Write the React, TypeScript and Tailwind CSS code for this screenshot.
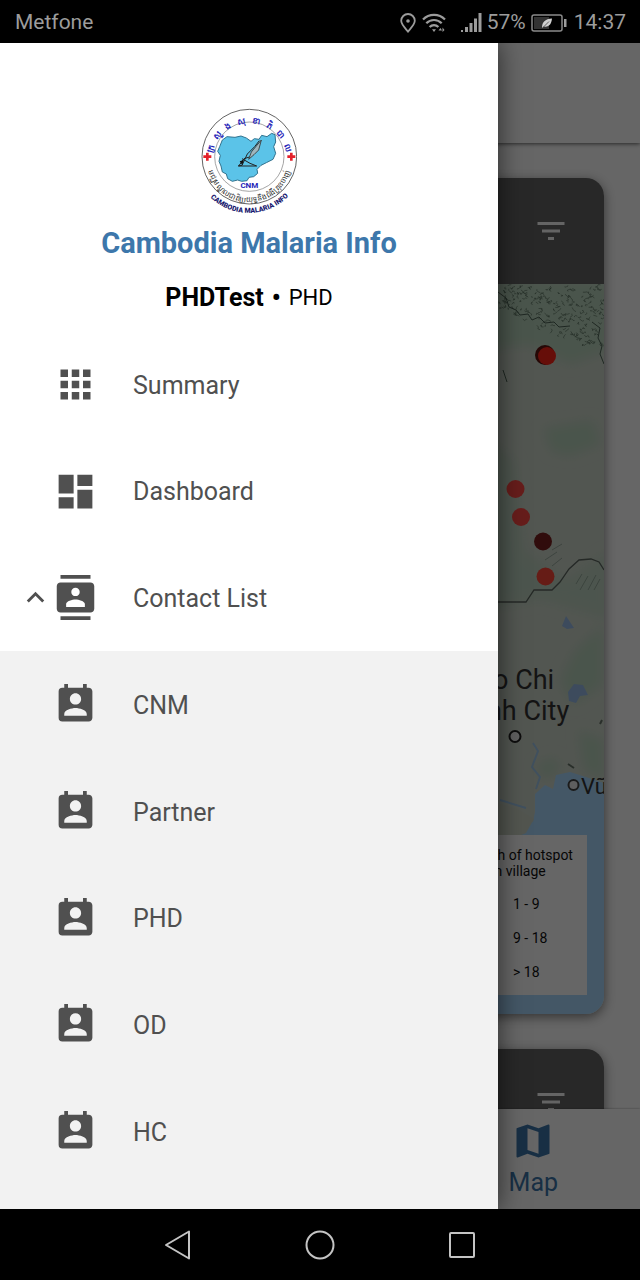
import type { ReactNode } from "react";
import {
  MdApps,
  MdContacts,
  MdDashboard,
  MdFilterList,
  MdKeyboardArrowUp,
  MdMap,
  MdPermContactCalendar,
} from "react-icons/md";

const subItems = ["CNM", "Partner", "PHD", "OD", "HC"];

const legend = ["1 - 9", "9 - 18", "> 18"];

const hotspots = [
  { x: 545, y: 355, r: 10, fill: "#5c1410" },
  { x: 547, y: 356, r: 9, fill: "#ff2418" },
  { x: 515.5, y: 489, r: 9, fill: "#ff4a44" },
  { x: 521, y: 517, r: 9, fill: "#ff4a44" },
  { x: 543, y: 541.5, r: 9, fill: "#78201e" },
  { x: 545.5, y: 576.5, r: 9, fill: "#ff4638" },
];

function StatusBar() {
  return (
    <header className="flex h-[43px] shrink-0 items-center justify-between bg-black pt-[2px] pr-[14px] pl-[15px] text-[21px] text-[#9c9c9c]">
      <span>Metfone</span>
      <div className="flex items-center">
        <svg className="mr-[6px] h-5 w-4" viewBox="0 0 16 20" fill="none" stroke="currentColor" strokeWidth="1.8">
          <path d="M8 18.600C5 15 1.200 11.300 1.200 7.800a6.800 6.800 0 0 1 13.600 0C14.800 11.300 11 15 8 18.600Z" />
          <circle cx="8" cy="8" r="1.8" fill="currentColor" stroke="none" />
        </svg>
        <svg className="mr-[15px] h-5 w-6" viewBox="0 0 24 20" fill="none" stroke="currentColor" strokeWidth="2.200">
          <path d="M1 6.500C7 .2 17 .2 23 6.500" />
          <path d="M4.300 10.300c4.300-4.400 11.100-4.400 15.400 0" />
          <path d="M7.600 14c2.500-2.600 6.300-2.600 8.800 0" />
          <path d="M10 16.200h4L12 19Z" fill="currentColor" stroke="none" />
          <path d="M16.500 17.500l2-2.600 1.500 2.600zM20.500 14.500l2 2.500-2 2z" fill="currentColor" stroke="none" />
        </svg>
        <svg className="mr-1 h-5 w-[22px]" viewBox="0 0 22 20" fill="currentColor">
          <path d="M0 17h2v2H0zM4 14h3v5H4zM8.500 10h3v9h-3zM13 5.500h3V19h-3zM17.500 0h3v19h-3z" />
        </svg>
        <span className="mr-[5px]">57%</span>
        <svg className="mr-[7px] h-[18px] w-9" viewBox="0 0 36 18" fill="none">
          <rect x="1" y="1" width="30" height="16" rx="2" stroke="#8a8a8a" strokeWidth="1.500" />
          <rect x="3" y="3" width="15" height="12" fill="#333" />
          <path d="M33 5h2.500v8H33z" fill="#9c9c9c" />
          <path d="M11 14c0-6 3-9 10-9.500C20.500 10 18 13.500 12.800 12.500z" fill="#d0d0d0" />
          <path d="M12 13.500 18 7.500" stroke="#444" strokeWidth=".8" />
        </svg>
        <span>14:37</span>
      </div>
    </header>
  );
}

function Logo() {
  return (
    <svg className="h-[108px] w-24" viewBox="30 21 288 324" role="img" aria-label="Cambodia Malaria Info logo">
      <defs>
        <path id="ring-top" d="M62 182a113 113 0 0 1 226 0" />
        <path id="ring-low" d="M48 180a127 127 0 0 0 254 0" />
        <path id="ring-base" d="M50 284a166 166 0 0 0 250 -4" />
      </defs>
      <circle cx="175" cy="170" r="142" fill="#fff" stroke="#444" strokeWidth="2.500" />
      <circle cx="175" cy="170" r="104" fill="none" stroke="#777" strokeWidth="2" />
      <path
        d="M86 140l8-20 14-10 24 2 18-4 16 6 14 10 10-8 14 2 8-12 16 4 14-10 10 4 2 22-6 14 6 20-8 18-20 10-16 8-12 12 2 12-12 10-14 2-6 10-16 2-12-4-16 4-14-8-4-14-12-6-4-18-6-14 4-18-8-12z"
        fill="#5bc3e8"
        stroke="#31738f"
        strokeWidth="3"
      />
      <path d="M205 122l-14 18-22 22-16 34-12 2M153 176l24 14 20 8-54 0 16-22 20-6" fill="none" stroke="#222" strokeWidth="3" />
      <path d="M211 120l-8 30-14 14-16 14 8-22z" fill="#9fb6bd" stroke="#333" strokeWidth="2.500" />
      <path d="M146 184l12-4-4 16z" fill="#111" />
      <g fill="#e3202a">
        <path d="M45 158h8v8h8v8h-8v8h-8v-8h-8v-8h8zM297 158h8v8h8v8h-8v8h-8v-8h-8v-8h8z" />
      </g>
      <text x="175" y="265" textAnchor="middle" fill="#2525b8" className="font-['Roboto',sans-serif] text-[24px] font-bold">
        CNM
      </text>
      <text fill="#2525b8" className="font-['Noto_Sans',sans-serif] text-[25px] font-bold whitespace-pre">
        <textPath href="#ring-top" startOffset="50%" textAnchor="middle">
          {"ក្រ   សួ   ង   សុ   ខា   ភិ   បា   ល"}
        </textPath>
      </text>
      <text fill="#222" className="font-['Noto_Sans',sans-serif] text-[22px]">
        <textPath href="#ring-low" startOffset="50%" textAnchor="middle">
          មជ្ឈមណ្ឌលជាតិប្រយុទ្ធនឹងជំងឺគ្រុនចាញ់
        </textPath>
      </text>
      <text fill="#17176e" className="font-['Roboto',sans-serif] text-[21px] font-black">
        <textPath href="#ring-base" startOffset="50%" textAnchor="middle">
          CAMBODIA MALARIA INFO
        </textPath>
      </text>
    </svg>
  );
}

function MenuRow({ icon, label, lead }: { icon: ReactNode; label: string; lead?: ReactNode }) {
  return (
    <>
      <span className="flex w-[35px] shrink-0">{lead}</span>
      <span className="shrink-0 text-[45px]">{icon}</span>
      <span className="ml-[35px] pt-[2px]">{label}</span>
    </>
  );
}

const rowClass = "flex h-full w-full items-center pl-[18px] text-left";

function Drawer() {
  return (
    <aside className="z-10 col-start-1 row-start-1 flex w-[498px] max-w-full flex-col bg-white shadow-[0_0_24px_rgba(0,0,0,0.6)]">
      <div className="flex h-[288px] shrink-0 flex-col items-center pt-16">
        <Logo />
        <h1 className="mt-3 text-[29px] leading-8 font-bold text-[#3d77ab]">Cambodia Malaria Info</h1>
        <p className="mt-[23px] flex items-center gap-2 leading-8 text-black">
          <span className="text-[25px] font-bold">PHDTest</span>
          <span className="text-[25px] font-bold">•</span>
          <span className="text-[22px]">PHD</span>
        </p>
      </div>
      <nav className="flex flex-1 flex-col text-[25px] text-[#505050]">
        <ul className="grid flex-[3] auto-rows-fr">
          <li>
            <a href="#summary" className={rowClass}>
              <MenuRow icon={<MdApps />} label="Summary" />
            </a>
          </li>
          <li>
            <a href="#dashboard" className={rowClass}>
              <MenuRow icon={<MdDashboard />} label="Dashboard" />
            </a>
          </li>
          <li>
            <button type="button" aria-expanded="true" className={rowClass}>
              <MenuRow icon={<MdContacts />} label="Contact List" lead={<MdKeyboardArrowUp className="text-[35px]" />} />
            </button>
          </li>
        </ul>
        <ul className="grid flex-[5] auto-rows-fr bg-[#f2f2f2] pb-6">
          {subItems.map((label) => (
            <li key={label}>
              <a href={`#${label.toLowerCase()}`} className={rowClass}>
                <MenuRow icon={<MdPermContactCalendar />} label={label} />
              </a>
            </li>
          ))}
        </ul>
      </nav>
    </aside>
  );
}

// Deterministic ridge strokes for the hilly area along the top of the map.
function ridges() {
  let seed = 7;
  const next = () => {
    seed = (seed * 16807) % 2147483647;
    return seed / 2147483647;
  };
  let d = "";
  for (let i = 0; i < 210; i++) {
    const x = 500 + next() * 103;
    const y = 286 + next() * (24 + (x - 498) * 0.42);
    d += `M${x.toFixed(1)} ${y.toFixed(1)}`;
    for (let k = 0; k < 3; k++) {
      d += `l${(next() * 4 - 1.5).toFixed(1)} ${(next() * 4 - 2).toFixed(1)}`;
    }
  }
  return d;
}

function TerrainMap() {
  return (
    <svg className="h-full w-full" viewBox="36 284 568 730" preserveAspectRatio="xMaxYMin slice" role="img" aria-label="Hotspot map">
      <defs>
        <filter id="soft" x="-20%" y="-20%" width="140%" height="140%">
          <feGaussianBlur stdDeviation="6" />
        </filter>
      </defs>
      <rect x="36" y="284" width="568" height="730" fill="#ced6cb" />
      <g filter="url(#soft)" fill="#b9d4bd">
        <path d="M490 280H610V350L570 365 530 345 490 350z" />
        <path d="M543 428l50-8 8 24-30 12-20-4z" />
        <path d="M490 440l25 20 10 90 40 30 45-30V620L540 600 490 610z" opacity=".7" />
        <path d="M560 680l15-30 28-25v60l-30 20z" />
        <path d="M578 730l26 10v40l-20-10zM535 765l20-8 6 14-18 8z" />
      </g>
      <path d={ridges()} fill="none" stroke="#4f6656" strokeWidth=".8" opacity=".7" />
      <path
        d="M498 292l8 6 3 9 7 3 4 5 8-1 4 6 7-3 6 6 9-1 5 5 11-1M592 322l8 6-2 10 4 8-2 8 4 10M503 370l4 12"
        fill="none"
        stroke="#4d6356"
        strokeWidth="1"
      />
      <path d="M498 602h28l8-12h18l8-8 9-13 10-9 12-1 8 3 5 8" fill="none" stroke="#5c6660" strokeWidth="1.300" />
      <path d="M580 590l8-14M588 590l8-15M576 584l6-10M594 590l6-11M545 560l12-8M552 550l10-6M552 566l10-8" fill="none" stroke="#8a9e92" strokeWidth=".8" />
      <path d="M562 626l4-10 4 6 4 6-7 1zM568 692l6-8 9 1 5 10-8 1-4 7-7-2z" fill="#98bce8" />
      <path d="M533 743l5 8-6 16 8 10-4 12M500 800l26 8" fill="none" stroke="#a0c8ea" strokeWidth="2" />
      <path
        d="M604 783l-18-6-16-5-14 3-3 14-8-4-10 9v18l-2 10-37-13v60H430v145h174z"
        fill="#aadaff"
      />
      <path d="M498 803l20 6 16 10-8 14-14 6h-18z" fill="#ccd5c6" />
      <path d="M568 764l6 4M600 724l2-4" fill="none" stroke="#68766a" strokeWidth="2" />
      {hotspots.map((spot, i) => (
        <circle key={i} cx={spot.x} cy={spot.y} r={spot.r} fill={spot.fill} />
      ))}
      <g className="font-['Roboto',sans-serif]" fill="#333">
        <text x="514" y="689" textAnchor="middle" className="text-[27px]">
          Ho Chi
        </text>
        <text x="513" y="720" textAnchor="middle" className="text-[27px]">
          Minh City
        </text>
        <text x="581" y="794" className="text-[22px]">
          Vũ
        </text>
      </g>
      <circle cx="515" cy="736.500" r="5.500" fill="#eee" stroke="#222" strokeWidth="2" />
      <circle cx="573.500" cy="785" r="5" fill="#eee" stroke="#444" strokeWidth="2" />
    </svg>
  );
}

function CardHeader() {
  return (
    <div className="flex h-[106px] items-center justify-end bg-[#646464] pr-[35px]">
      <button type="button" aria-label="Filter" className="text-[36px] text-[#fafafa]">
        <MdFilterList />
      </button>
    </div>
  );
}

function Page() {
  return (
    <div className="col-start-1 row-start-1 flex min-h-0 flex-col bg-white">
      <div className="z-[1] h-[100px] shrink-0 bg-white shadow-[0_1px_4px_rgba(0,0,0,0.6)]" />
      <div className="flex min-h-0 flex-1 basis-0 flex-col gap-[35px] overflow-hidden px-[36px] pt-[35px]">
        <section className="shrink-0 overflow-hidden rounded-[18px] shadow-[0_3px_12px_rgba(0,0,0,0.5)]">
          <CardHeader />
          <div className="relative h-[730px]">
            <TerrainMap />
            <div className="absolute right-[17px] bottom-[19px] h-[160px] w-[134px] bg-white pt-3 pl-[12px] text-[14px] text-[#111]">
              <p className="leading-4 whitespace-nowrap">
                Month of hotspot
                <br />
                within village
              </p>
              <ul className="mt-2 pl-[48px]">
                {legend.map((range) => (
                  <li key={range} className="flex h-[34px] items-center">
                    {range}
                  </li>
                ))}
              </ul>
            </div>
          </div>
        </section>
        <section className="shrink-0 overflow-hidden rounded-t-[18px] shadow-[0_3px_12px_rgba(0,0,0,0.5)]">
          <CardHeader />
        </section>
      </div>
      <nav className="z-[1] flex h-[100px] shrink-0 justify-end bg-white shadow-[0_0_2px_rgba(0,0,0,0.4)]">
        <a href="#map" className="flex w-1/3 flex-col items-center pt-[10px] text-[25px] leading-8 text-[#3d77ab]">
          <MdMap className="text-[44px]" />
          <span className="mt-1">Map</span>
        </a>
      </nav>
    </div>
  );
}

function SystemBar() {
  return (
    <footer className="flex h-[71px] shrink-0 items-center justify-center bg-black text-[#c4c4c4]">
      <button type="button" aria-label="Back" className="flex w-[142px] justify-center">
        <svg className="size-8" viewBox="0 0 32 32" fill="none" stroke="currentColor" strokeWidth="2" strokeLinejoin="round">
          <path d="M27 2.500v27L4 16z" />
        </svg>
      </button>
      <button type="button" aria-label="Home" className="flex w-[142px] justify-center">
        <svg className="size-8" viewBox="0 0 32 32" fill="none" stroke="currentColor" strokeWidth="2">
          <circle cx="16" cy="16" r="13.500" />
        </svg>
      </button>
      <button type="button" aria-label="Recent apps" className="flex w-[142px] justify-center">
        <svg className="size-8" viewBox="0 0 32 32" fill="none" stroke="currentColor" strokeWidth="2">
          <rect x="4" y="4" width="24" height="24" rx="1" />
        </svg>
      </button>
    </footer>
  );
}

export default function App() {
  return (
    <div className="flex h-dvh flex-col bg-black font-['Roboto',sans-serif]">
      <StatusBar />
      <main className="grid min-h-0 flex-1 grid-cols-1 grid-rows-1 overflow-hidden">
        <Page />
        <div className="z-[5] col-start-1 row-start-1 bg-black/60" />
        <Drawer />
      </main>
      <SystemBar />
    </div>
  );
}
